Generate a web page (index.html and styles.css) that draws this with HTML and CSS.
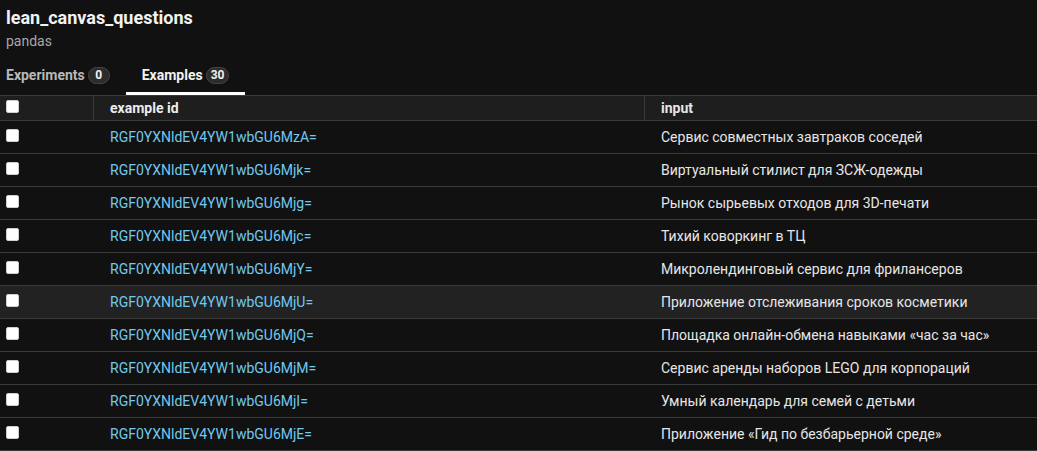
FILE: index.html
```html
<!DOCTYPE html>
<html lang="ru">
<head>
<meta charset="utf-8">
<title>lean_canvas_questions</title>
<link rel="stylesheet" href="styles.css">
</head>
<body>
<header class="page-head">
  <h1 class="title">lean_canvas_questions</h1>
  <div class="subtitle">pandas</div>
  <nav class="tabs">
    <div class="tab"><span>Experiments</span><span class="badge">0</span></div>
    <div class="tab active"><span>Examples</span><span class="badge">30</span></div>
  </nav>
</header>
<div class="table">
  <div class="row head">
    <div class="cell check"><input type="checkbox" class="cb"></div>
    <div class="cell id">example id</div>
    <div class="cell input">input</div>
  </div>
  <div class="row">
    <div class="cell check"><input type="checkbox" class="cb"></div>
    <div class="cell id"><a class="link">RGF0YXNldEV4YW1wbGU6MzA=</a></div>
    <div class="cell input">Сервис совместных завтраков соседей</div>
  </div>
  <div class="row">
    <div class="cell check"><input type="checkbox" class="cb"></div>
    <div class="cell id"><a class="link">RGF0YXNldEV4YW1wbGU6Mjk=</a></div>
    <div class="cell input">Виртуальный стилист для ЗСЖ-одежды</div>
  </div>
  <div class="row">
    <div class="cell check"><input type="checkbox" class="cb"></div>
    <div class="cell id"><a class="link">RGF0YXNldEV4YW1wbGU6Mjg=</a></div>
    <div class="cell input">Рынок сырьевых отходов для 3D-печати</div>
  </div>
  <div class="row">
    <div class="cell check"><input type="checkbox" class="cb"></div>
    <div class="cell id"><a class="link">RGF0YXNldEV4YW1wbGU6Mjc=</a></div>
    <div class="cell input">Тихий коворкинг в ТЦ</div>
  </div>
  <div class="row">
    <div class="cell check"><input type="checkbox" class="cb"></div>
    <div class="cell id"><a class="link">RGF0YXNldEV4YW1wbGU6MjY=</a></div>
    <div class="cell input">Микролендинговый сервис для фрилансеров</div>
  </div>
  <div class="row hover">
    <div class="cell check"><input type="checkbox" class="cb"></div>
    <div class="cell id"><a class="link">RGF0YXNldEV4YW1wbGU6MjU=</a></div>
    <div class="cell input">Приложение отслеживания сроков косметики</div>
  </div>
  <div class="row">
    <div class="cell check"><input type="checkbox" class="cb"></div>
    <div class="cell id"><a class="link">RGF0YXNldEV4YW1wbGU6MjQ=</a></div>
    <div class="cell input">Площадка онлайн-обмена навыками «час за час»</div>
  </div>
  <div class="row">
    <div class="cell check"><input type="checkbox" class="cb"></div>
    <div class="cell id"><a class="link">RGF0YXNldEV4YW1wbGU6MjM=</a></div>
    <div class="cell input">Сервис аренды наборов LEGO для корпораций</div>
  </div>
  <div class="row">
    <div class="cell check"><input type="checkbox" class="cb"></div>
    <div class="cell id"><a class="link">RGF0YXNldEV4YW1wbGU6MjI=</a></div>
    <div class="cell input">Умный календарь для семей с детьми</div>
  </div>
  <div class="row">
    <div class="cell check"><input type="checkbox" class="cb"></div>
    <div class="cell id"><a class="link">RGF0YXNldEV4YW1wbGU6MjE=</a></div>
    <div class="cell input">Приложение «Гид по безбарьерной среде»</div>
  </div>
</div>
</body>
</html>
```

FILE: styles.css
```css
html, body {
  margin: 0;
  padding: 0;
  background: #111111;
  color: #e8e8e8;
  font-family: Roboto, "Noto Sans", "Liberation Sans", sans-serif;
  overflow: hidden;
}

.page-head {
  padding: 7px 6px 0 6px;
}

.title {
  margin: 0;
  font-size: 18px;
  line-height: 21.6px;
  font-weight: 700;
  color: #f2f2f2;
}

.subtitle {
  margin-top: 2px;
  font-size: 14px;
  line-height: 20px;
  color: #a8a8a8;
}

.tabs {
  display: flex;
  margin-top: 8px;
}

.tab {
  display: flex;
  align-items: center;
  gap: 3px;
  padding: 8px 16px;
  border-bottom: 3px solid transparent;
  font-size: 14px;
  line-height: 17px;
  font-weight: 700;
  color: #b9b9b9;
}

.tab:first-child {
  padding-left: 0;
}

.tab.active {
  color: #f2f2f2;
  border-bottom-color: #ffffff;
}

.badge {
  box-sizing: border-box;
  min-width: 22px;
  height: 17px;
  padding: 0 4px;
  border-radius: 9px;
  background: #2c2c2c;
  border: 1px solid #454545;
  font-size: 12px;
  line-height: 15px;
  font-weight: 700;
  color: #f0f0f0;
  text-align: center;
}

.table {
  border-top: 1px solid #3b3b3b;
}

.row {
  display: grid;
  grid-template-columns: 94px 551px 1fr;
  height: 33px;
  box-sizing: border-box;
  border-bottom: 1px solid #3b3b3b;
  align-items: center;
  font-size: 14px;
}

.row.head {
  height: 25px;
  background: #1e1e1e;
  font-weight: 700;
  color: #ededed;
}

.row.hover {
  background: #222222;
}

.cell {
  white-space: nowrap;
  overflow: hidden;
  box-sizing: border-box;
  height: 100%;
  display: flex;
  align-items: center;
  padding: 0 16px;
}

.cell.check {
  padding: 0 0 2px 6px;
}

.row.head .cell.check,
.row.head .cell.id {
  border-right: 1px solid #3b3b3b;
}

.row.head .cell.id {
  padding-left: 16px;
}

.cb {
  appearance: none;
  -webkit-appearance: none;
  margin: 0;
  width: 13px;
  height: 13px;
  border-radius: 2px;
  background: #ffffff;
  border: 1px solid #cfcfcf;
}

.link {
  color: #72c9ef;
  text-decoration: none;
  cursor: pointer;
}

.cell.input {
  color: #e6e6e6;
}
```
